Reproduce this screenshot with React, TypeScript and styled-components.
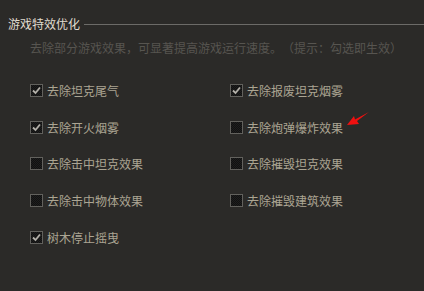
import styled, { createGlobalStyle } from "styled-components";

const GlobalStyle = createGlobalStyle`
  html, body {
    margin: 0;
    padding: 0;
    background: #2b2a28;
  }
  body {
    font-family: "Noto Sans CJK SC", "Liberation Sans", sans-serif;
    font-size: 12px;
    text-spacing-trim: space-all;
  }
`;

const Page = styled.div`
  position: relative;
  width: 424px;
  height: 291px;
  padding-top: 16px;
  box-sizing: border-box;
  background: #2b2a28;
  overflow: hidden;
`;

const Header = styled.div`
  display: flex;
  align-items: center;
  height: 16px;
  padding-left: 8px;
`;

const Title = styled.span`
  color: #e0dcd0;
  font-size: 12px;
  line-height: 16px;
  white-space: nowrap;
`;

const Rule = styled.div`
  flex: 1;
  height: 1px;
  margin-left: 4px;
  background: #6c6b68;
`;

const Hint = styled.div`
  margin-top: 8px;
  padding-left: 30px;
  color: #575550;
  font-size: 12px;
  line-height: 16px;
  white-space: nowrap;
`;

const Options = styled.div`
  display: grid;
  grid-template-columns: 200px 200px;
  grid-auto-rows: 36.7px;
  margin-top: 16px;
  padding-left: 30px;
`;

const Option = styled.label`
  display: flex;
  align-items: center;
  gap: 4px;
  color: #aba593;
  font-size: 12px;
  white-space: nowrap;
`;

const Box = styled.span`
  display: flex;
  align-items: center;
  justify-content: center;
  width: 11px;
  height: 11px;
  border: 1px solid #62615d;
  background-color: #151515;
  background-image: repeating-conic-gradient(#1e1e1e 0 25%, #111 0 50%);
  background-size: 2px 2px;
`;

const Arrow = styled.svg`
  position: absolute;
  left: 340px;
  top: 108px;
`;

const options: { label: string; checked: boolean }[] = [
  { label: "去除坦克尾气", checked: true },
  { label: "去除报废坦克烟雾", checked: true },
  { label: "去除开火烟雾", checked: true },
  { label: "去除炮弹爆炸效果", checked: false },
  { label: "去除击中坦克效果", checked: false },
  { label: "去除摧毁坦克效果", checked: false },
  { label: "去除击中物体效果", checked: false },
  { label: "去除摧毁建筑效果", checked: false },
  { label: "树木停止摇曳", checked: true },
];

function CheckBox({ checked }: { checked: boolean }) {
  return (
    <Box>
      {checked ? (
        <svg width="9" height="9" viewBox="0 0 9 9">
          <polyline
            points="1,4.5 3.5,7 8,1.5"
            fill="none"
            stroke="#b4b1aa"
            strokeWidth="1.8"
          />
        </svg>
      ) : null}
    </Box>
  );
}

export default function App() {
  return (
    <Page>
      <GlobalStyle />
      <Header>
        <Title>游戏特效优化</Title>
        <Rule />
      </Header>
      <Hint>去除部分游戏效果，可显著提高游戏运行速度。（提示：勾选即生效）</Hint>
      <Options>
        {options.map((o) => (
          <Option key={o.label}>
            <CheckBox checked={o.checked} />
            {o.label}
          </Option>
        ))}
      </Options>
      <Arrow width="34" height="22" viewBox="340 108 34 22">
        <path
          d="M347 125 L354 116 L355 119.5 L369 112 L357 121 L359 124 Z"
          fill="#f01010"
        />
      </Arrow>
    </Page>
  );
}
